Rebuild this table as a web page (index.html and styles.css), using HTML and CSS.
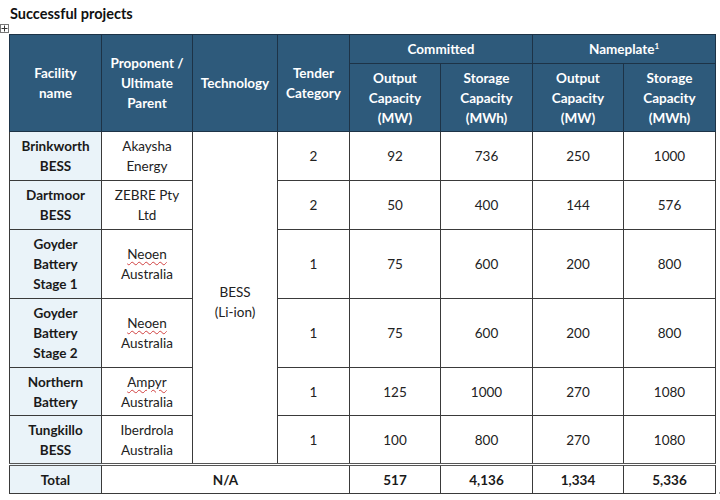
FILE: index.html
```html
<!DOCTYPE html>
<html>
<head>
<meta charset="utf-8">
<link rel="stylesheet" href="styles.css">
</head>
<body>
<h1 class="title">Successful projects</h1>
<div class="wrap">
  <span class="handle"><svg width="9" height="9" viewBox="0 0 9 9"><rect x="0.5" y="0.5" width="8" height="8" fill="#fff" stroke="#777"/><path d="M4.5 1.5v6M1.5 4.5h6" stroke="#333" stroke-width="1"/></svg></span>
  <table class="grid">
    <colgroup>
      <col class="c1"><col class="c2"><col class="c3"><col class="c4">
      <col class="c5"><col class="c6"><col class="c7"><col class="c8">
    </colgroup>
    <thead>
      <tr class="h1">
        <th rowspan="2">Facility<br>name</th>
        <th rowspan="2">Proponent /<br>Ultimate<br>Parent</th>
        <th rowspan="2">Technology</th>
        <th rowspan="2">Tender<br>Category</th>
        <th colspan="2">Committed</th>
        <th colspan="2">Nameplate<sup>1</sup></th>
      </tr>
      <tr class="h2">
        <th>Output<br>Capacity<br>(MW)</th>
        <th>Storage<br>Capacity<br>(MWh)</th>
        <th>Output<br>Capacity<br>(MW)</th>
        <th>Storage<br>Capacity<br>(MWh)</th>
      </tr>
    </thead>
    <tbody>
      <tr class="r2">
        <td class="name">Brinkworth<br>BESS</td>
        <td>Akaysha<br>Energy</td>
        <td rowspan="6" class="tech">BESS<br>(Li-ion)</td>
        <td>2</td><td>92</td><td>736</td><td>250</td><td>1000</td>
      </tr>
      <tr class="r2">
        <td class="name">Dartmoor<br>BESS</td>
        <td>ZEBRE Pty<br>Ltd</td>
        <td>2</td><td>50</td><td>400</td><td>144</td><td>576</td>
      </tr>
      <tr class="r3">
        <td class="name">Goyder<br>Battery<br>Stage 1</td>
        <td><span class="sp">Neoen</span><br>Australia</td>
        <td>1</td><td>75</td><td>600</td><td>200</td><td>800</td>
      </tr>
      <tr class="r3">
        <td class="name">Goyder<br>Battery<br>Stage 2</td>
        <td><span class="sp">Neoen</span><br>Australia</td>
        <td>1</td><td>75</td><td>600</td><td>200</td><td>800</td>
      </tr>
      <tr class="r2s">
        <td class="name">Northern<br>Battery</td>
        <td><span class="sp">Ampyr</span><br>Australia</td>
        <td>1</td><td>125</td><td>1000</td><td>270</td><td>1080</td>
      </tr>
      <tr class="r2s">
        <td class="name">Tungkillo<br>BESS</td>
        <td>Iberdrola<br>Australia</td>
        <td>1</td><td>100</td><td>800</td><td>270</td><td>1080</td>
      </tr>
    </tbody>
    <tfoot>
      <tr class="total">
        <td class="name">Total</td>
        <td colspan="3" class="b">N/A</td>
        <td class="b">517</td><td class="b">4,136</td><td class="b">1,334</td><td class="b">5,336</td>
      </tr>
    </tfoot>
  </table>
  <span class="resize"></span>
</div>
</body>
</html>
```

FILE: styles.css
```css
html, body {
  margin: 0;
  padding: 0;
  background: #ffffff;
}
body {
  font-family: Lato, "Open Sans", sans-serif;
  color: #222222;
}
.title {
  margin: 0;
  padding: 5px 0 0 10px;
  font-size: 14.5px;
  font-weight: 700;
  line-height: 17px;
  color: #111111;
}
.wrap {
  position: relative;
  padding: 12px 0 0 9px;
}
.handle {
  position: absolute;
  left: 0;
  top: 2px;
  width: 9px;
  height: 9px;
  line-height: 0;
}
.resize {
  position: absolute;
  left: 714px;
  top: 470px;
  width: 5px;
  height: 5px;
  border-right: 1px solid #aaa;
  border-bottom: 1px solid #aaa;
}
.grid {
  border-collapse: collapse;
  table-layout: fixed;
  width: 706px;
  font-size: 13.5px;
  line-height: 20px;
}
.c1 { width: 92px; }
.c2 { width: 91px; }
.c3 { width: 85px; }
.c4 { width: 72px; }
.c5 { width: 91px; }
.c6 { width: 92px; }
.c7 { width: 91px; }
.c8 { width: 92px; }
.grid th, .grid td {
  border: 1px solid #3a3a3a;
  text-align: center;
  vertical-align: middle;
  padding: 0 4px;
}
.grid th {
  background: #2e5a7b;
  color: #ffffff;
  font-weight: 700;
  border-color: #1d3347;
}
.grid sup {
  font-size: 8px;
  line-height: 0;
  vertical-align: 5px;
}
.h1 th { height: 28px; }
.h2 th { height: 67px; }
.r2 td { height: 48px; }
.r2s td { height: 47px; }
.r3 td { height: 68px; }
.grid td.name {
  background: #eaf3f9;
  font-weight: 700;
  color: #1a1a1a;
}
.grid td.tech {
  padding-top: 8px;
}
.total td {
  height: 27px;
  border-top: 3px double #555555;
}
.grid td.b {
  font-weight: 700;
  color: #1a1a1a;
}
.sp {
  text-decoration: underline wavy #d04040;
  text-decoration-thickness: 1px;
  text-underline-offset: 2px;
}
```
